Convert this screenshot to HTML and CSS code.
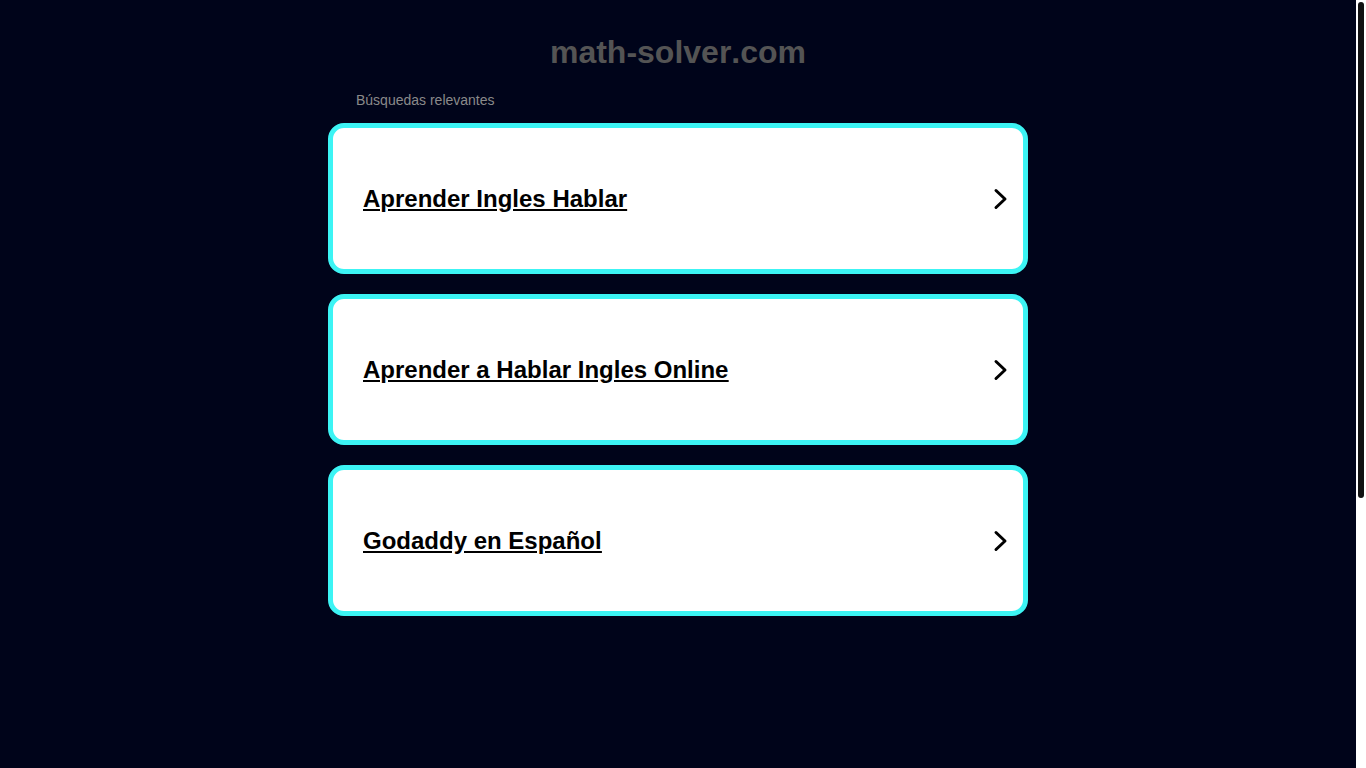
FILE: index.html
```html
<!DOCTYPE html>
<html lang="es">
<head>
	<meta charset="UTF-8">
	<title>math-solver.com</title>
	<link rel="stylesheet" href="styles.css">
</head>
<body>
	<div class="page">
		<h1 class="page__domain">math-solver.com</h1>
		<div class="list">
			<p class="list__title">Búsquedas relevantes</p>
			<a class="list__card" href="#">
				<span class="list__card__text">Aprender Ingles Hablar</span>
				<svg class="list__card__arrow" width="16" height="22" viewBox="0 0 16 22"><path d="M3 2.5 L12 11 L3 19.5" fill="none" stroke="#000" stroke-width="3" stroke-linecap="round" stroke-linejoin="round"/></svg>
			</a>
			<a class="list__card" href="#">
				<span class="list__card__text">Aprender a Hablar Ingles Online</span>
				<svg class="list__card__arrow" width="16" height="22" viewBox="0 0 16 22"><path d="M3 2.5 L12 11 L3 19.5" fill="none" stroke="#000" stroke-width="3" stroke-linecap="round" stroke-linejoin="round"/></svg>
			</a>
			<a class="list__card" href="#">
				<span class="list__card__text">Godaddy en Español</span>
				<svg class="list__card__arrow" width="16" height="22" viewBox="0 0 16 22"><path d="M3 2.5 L12 11 L3 19.5" fill="none" stroke="#000" stroke-width="3" stroke-linecap="round" stroke-linejoin="round"/></svg>
			</a>
		</div>
	</div>
	<div class="scrollbar"><div class="scrollbar__thumb"></div></div>
</body>
</html>
```

FILE: styles.css
```css
html {
	background-color: #00041a;
}
body {
	margin: 0;
	padding-right: 10px;
	background-color: #00041a;
	font-family: "Liberation Sans", Arial, sans-serif;
	font-kerning: none;
}
.page {
	min-height: 1190px;
	padding-top: 34px;
	box-sizing: border-box;
}
.page__domain {
	margin: 0;
	text-align: center;
	font-size: 32px;
	line-height: 37px;
	font-weight: bold;
	color: #545454;
}
.list {
	width: 700px;
	margin: 0 auto;
	padding-top: 19px;
}
.list__title {
	margin: 0 0 13px 28px;
	font-size: 14px;
	line-height: 20px;
	color: #8a8a8a;
}
.list__card {
	display: flex;
	align-items: center;
	justify-content: space-between;
	height: 151px;
	box-sizing: border-box;
	margin-bottom: 20px;
	padding: 0 14px 0 30px;
	background-color: #fff;
	border: 5px solid #3cf4f4;
	border-radius: 16px;
	color: #000;
}
.list__card__text {
	font-size: 24px;
	line-height: 28px;
	font-weight: bold;
	text-decoration: underline;
}
.list__card__arrow {
	display: block;
}
.scrollbar {
	position: fixed;
	top: 0;
	right: 0;
	width: 10px;
	height: 100vh;
	background-color: #fff;
}
.scrollbar__thumb {
	margin: 2px 2px 0 2px;
	height: 496px;
	background-color: #111;
	border-radius: 3px;
}
```
